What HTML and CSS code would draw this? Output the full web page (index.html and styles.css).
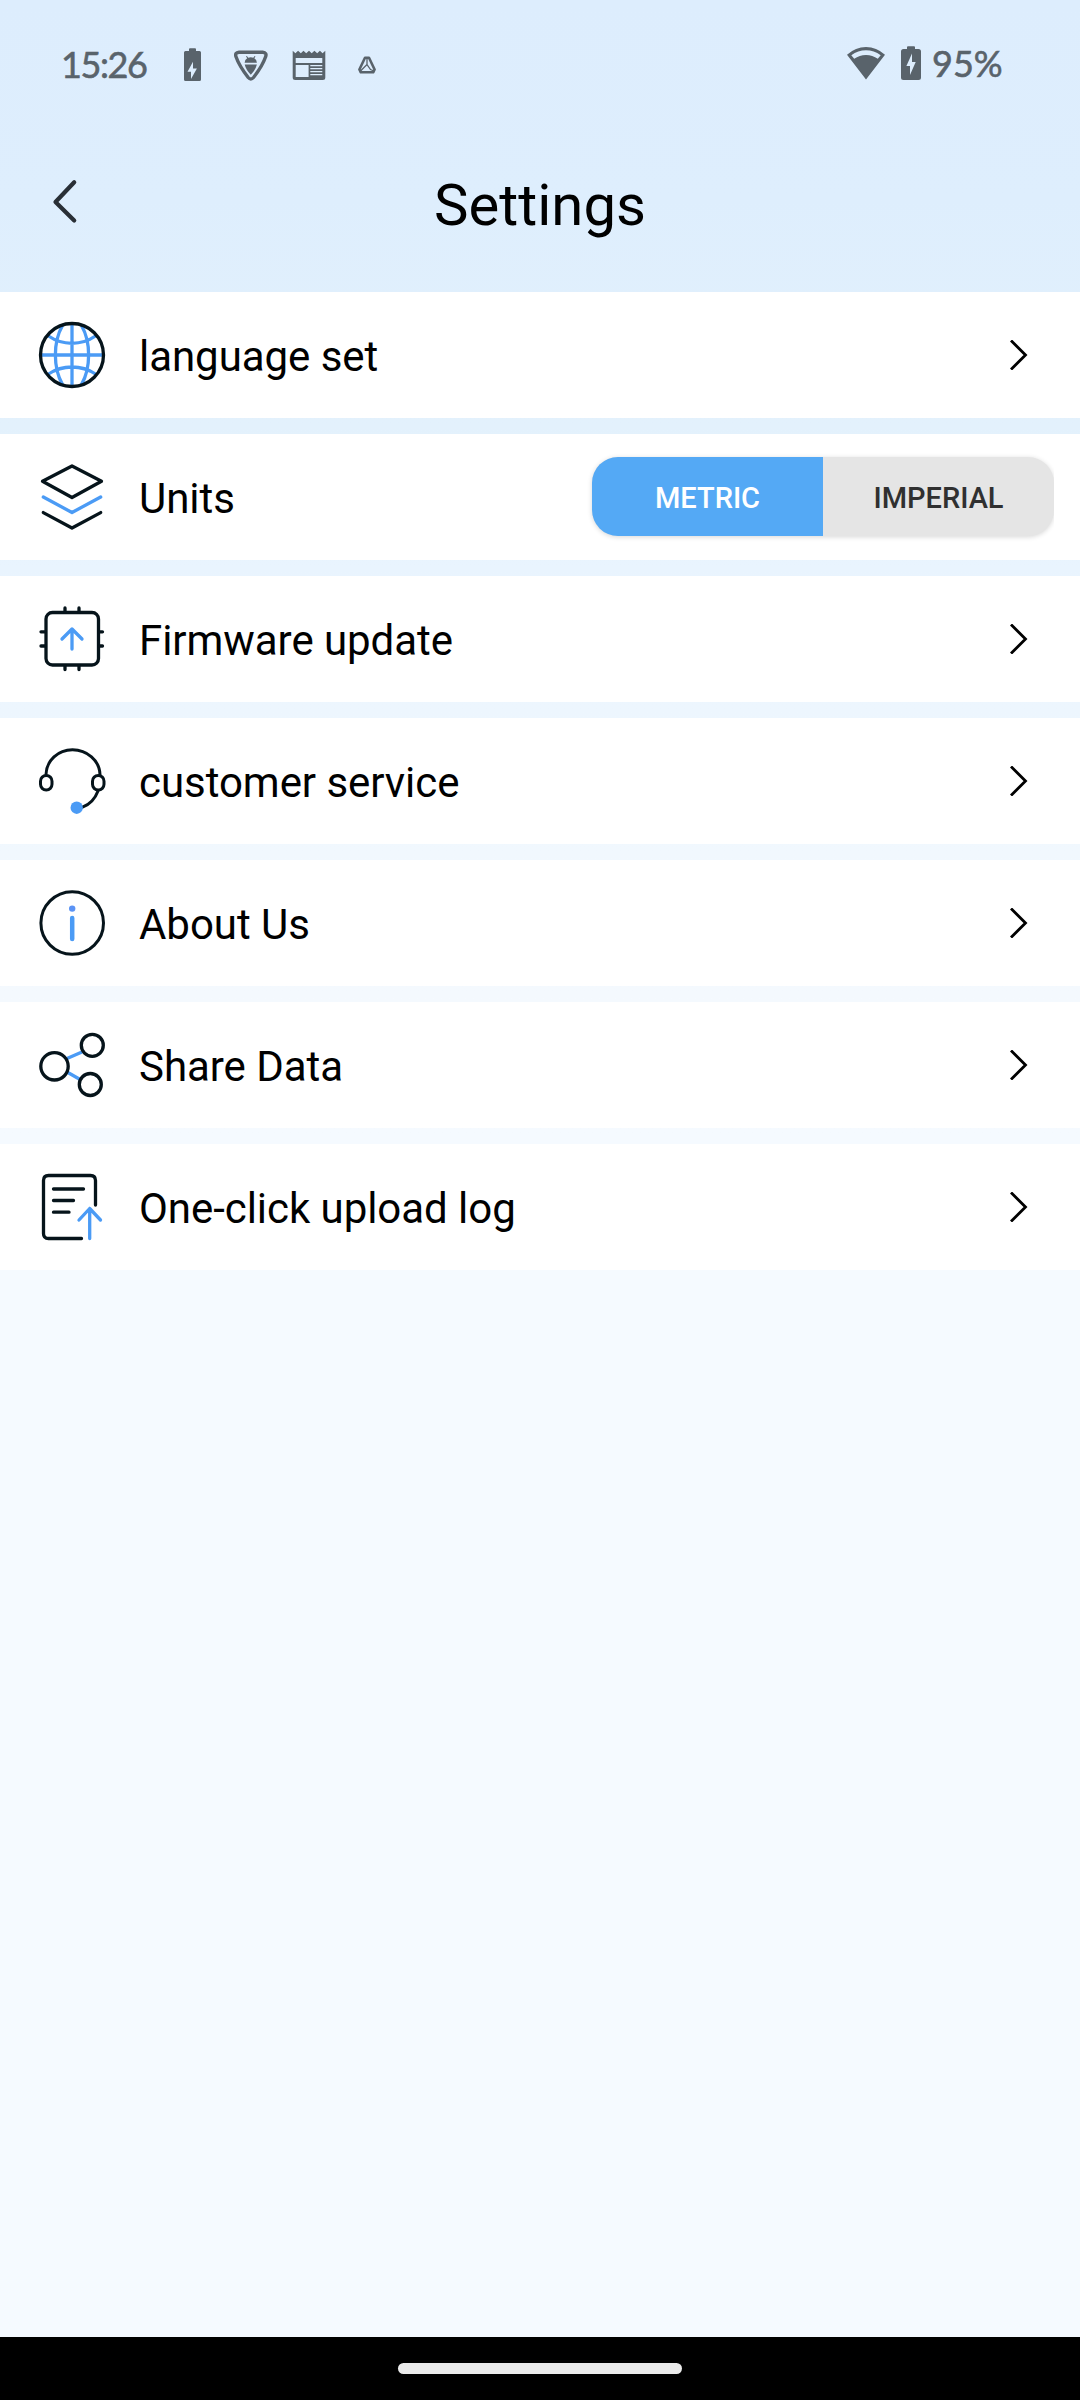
FILE: index.html
```html
<!DOCTYPE html>
<html lang="en">
<head>
<meta charset="utf-8">
<title>Settings</title>
<link rel="stylesheet" href="styles.css">
</head>
<body>
<div class="screen">
  <div class="status-bar">
    <div class="status-left">
      <span class="clock">15:26</span>
      <svg class="st-battery" width="17" height="36" viewBox="0 0 17 36"><path fill="#59636b" fill-rule="evenodd" d="M5 4V2.3Q5 1.3 6 1.3H11Q12 1.3 12 2.3V4H15.5Q17 4 17 5.5V32.500Q17 34 15.500 34H1.500Q0 34 0 32.500V5.500Q0 4 1.500 4ZM9 14.800L3.500 24.700H7V32L12.900 21.500H9Z"/></svg>
      <svg class="st-shield" width="34" height="36" viewBox="0 0 34 36"><path fill="none" stroke="#59636b" stroke-width="3.400" stroke-linejoin="round" d="M5 5.200H28.700Q33.200 5.600 31.600 9.800Q28.500 19 19.500 30.500Q16.800 33.600 14.200 30.500Q5.200 19 2 9.800Q.6 5.600 5 5.200Z"/><path fill="#59636b" d="M10.600 15.800Q10.800 12.700 13.200 11.300L12 9.400L12.900 8.900L14.200 10.800Q16.800 9.900 19.300 10.800L20.600 8.900L21.500 9.400L20.300 11.300Q22.700 12.700 22.900 15.800ZM10.700 17.500H22.900Q21.500 23 16.800 27.700Q12 23 10.700 17.500Z"/></svg>
      <svg class="st-news" width="34" height="36" viewBox="0 0 34 36"><path fill="#59636b" fill-rule="evenodd" d="M.7 3.700L3.400 6.200L6.100 3.700L8.800 6.200L11.500 3.700L14.200 6.200L17 3.700L19.700 6.200L22.400 3.700L25.200 6.200L27.900 3.700L30.600 6.200L33.300 3.700V30.500Q33.300 33 30.800 33H3.200Q.7 33 .7 30.500ZM3.700 11V16H30.300V11ZM3.700 18V30H16.600V18ZM18.300 18V19.300H30.300V18ZM18.300 21V22.300H30.300V21ZM18.300 24V25.300H30.300V24ZM18.300 27V28.300H30.300V27Z"/></svg>
      <svg class="st-triangle" width="18" height="36" viewBox="0 0 18 36"><path fill="none" stroke="#59636b" stroke-width="2.600" stroke-linejoin="round" d="M7 10.700H11L16.600 22.500L15.200 25.300H2.800L1.400 22.500Z"/><path fill="none" stroke="#59636b" stroke-width="1.300" d="M9 11V17.500L12.500 22.500L16 24M9 17.500L5.500 21L2.500 24"/></svg>
    </div>
    <div class="status-right">
      <svg width="38" height="36" viewBox="0 0 38 36"><path fill="#59636b" fill-rule="evenodd" d="M0 9.800Q8.500 2 19 2Q29.500 2 38 9.800L19 34.500ZM4.300 10.200L7.200 13.800Q12.500 9.900 19 9.900Q25.500 9.900 30.800 13.800L33.700 10.200Q27 5.200 19 5.200Q11 5.200 4.300 10.200Z"/></svg>
      <svg class="st-battery2" width="20" height="36" viewBox="0 0 20 36"><path fill="#59636b" fill-rule="evenodd" d="M6 4V2.200Q6 1.200 7 1.200H13Q14 1.200 14 2.200V4H17.500Q20 4 20 6.500V32.500Q20 35 17.500 35H2.500Q0 35 0 32.500V6.500Q0 4 2.500 4ZM11 8.500L5.400 21H9V30L14.700 17H11Z"/></svg>
      <span class="percent">95%</span>
    </div>
  </div>

  <header class="title-bar">
    <svg class="back" width="26" height="46" viewBox="0 0 26 46"><path fill="none" stroke="#292f36" stroke-width="4.200" stroke-linecap="round" stroke-linejoin="round" d="M22.200 3.200L3.500 23L22.200 41.600"/></svg>
    <h1 class="title">Settings</h1>
  </header>

  <main class="list">
    <div class="row">
      <svg class="icon" viewBox="0 0 66 66"><g class="blue"><path d="M33 2V64M2 33H64M23.500 3.500C14 20 14 46 23.500 62.500M42.500 3.500C52 20 52 46 42.500 62.500M9.500 14Q20 21.300 33 21.300T56.500 14M9.500 52Q20 45 33 45T56.500 52"/></g><circle class="dark" cx="33" cy="33" r="31.500"/></svg>
      <span class="label">language set</span>
      <svg class="chevron" viewBox="0 0 20 30"><path d="M2 .5L16.500 15L2 29.500"/></svg>
    </div>
    <div class="row">
      <svg class="icon" viewBox="0 0 66 66"><path class="dark" d="M33 2L62.500 17.300L33 33.500L3.500 17.300Z"/><path class="blue" d="M4.300 33L33 48.500L61.700 33"/><path class="dark" d="M4.300 48.600L33 64L61.700 48.600"/></svg>
      <span class="label">Units</span>
      <div class="toggle"><span class="seg seg-on">METRIC</span><span class="seg">IMPERIAL</span></div>
    </div>
    <div class="row">
      <svg class="icon" viewBox="0 0 66 66"><rect class="dark" x="7" y="6.500" width="52.500" height="52.500" rx="6.500"/><path class="dark" d="M26 6V2M40 6V2M26 60V63.500M40 60V63.500M6 25.800H2M6 40H2M60 25.800H63.500M60 40H63.500"/><path class="blue" d="M33 43V23M23 33L33 23L43 33"/></svg>
      <span class="label">Firmware update</span>
      <svg class="chevron" viewBox="0 0 20 30"><path d="M2 .5L16.500 15L2 29.500"/></svg>
    </div>
    <div class="row">
      <svg class="icon" viewBox="0 0 66 66"><path class="dark thin" d="M7 26.500C7.500 12.500 19 1.700 33.500 1.700S60.500 12.500 61 26.500M59 43Q54.500 55 43.500 59.200"/><rect class="dark thin" x="1.500" y="27.500" width="11.500" height="14.500" rx="5.700"/><rect class="dark thin" x="53.500" y="27.500" width="11.500" height="14.500" rx="5.700"/><circle cx="37.700" cy="59.700" r="6.200" fill="#4b9bf5"/></svg>
      <span class="label">customer service</span>
      <svg class="chevron" viewBox="0 0 20 30"><path d="M2 .5L16.500 15L2 29.500"/></svg>
    </div>
    <div class="row">
      <svg class="icon" viewBox="0 0 66 66"><circle class="dark thin" cx="33.200" cy="33" r="31.300"/><circle cx="33.200" cy="18.600" r="3.200" fill="#5b93f5"/><path class="blue wide" d="M33.200 28V49"/></svg>
      <span class="label">About Us</span>
      <svg class="chevron" viewBox="0 0 20 30"><path d="M2 .5L16.500 15L2 29.500"/></svg>
    </div>
    <div class="row">
      <svg class="icon" viewBox="0 0 66 66"><path class="blue butt" d="M28 26.500L43 20M28 40L42 48"/><g class="dark"><circle cx="15.500" cy="34.300" r="13.700"/><circle cx="53.300" cy="13.300" r="11"/><circle cx="51.300" cy="52.500" r="11"/></g></svg>
      <span class="label">Share Data</span>
      <svg class="chevron" viewBox="0 0 20 30"><path d="M2 .5L16.500 15L2 29.500"/></svg>
    </div>
    <div class="row">
      <svg class="icon" viewBox="0 0 66 66"><path class="dark" d="M42.500 64.500H9.500Q4.500 64.500 4.500 59.500V6.500Q4.500 1.500 9.500 1.500H51.500Q56.500 1.500 56.500 6.500V31M14.500 15H44.500M14.500 26.500H34.500M14.500 38.200H30"/><path class="blue" d="M50.700 64.500V34.500M40 46L50.700 34.500L61.500 46"/></svg>
      <span class="label">One-click upload log</span>
      <svg class="chevron" viewBox="0 0 20 30"><path d="M2 .5L16.500 15L2 29.500"/></svg>
    </div>
  </main>
  <div class="nav-bar"><div class="nav-pill"></div></div>
</div>
</body>
</html>
```
FILE: styles.css
```css
* { box-sizing: border-box; }
body { margin: 0; }
.screen {
  display: flex;
  flex-direction: column;
  width: 1080px;
  height: 2400px;
  font-family: Roboto, "Liberation Sans", sans-serif;
  color: #000;
  background: linear-gradient(180deg, #ddedfd 0, #deeefd 200px, #e3f1fc 426px, #e9f4fe 568px, #edf6fe 710px, #f1f8fe 852px, #f4f9fe 994px, #f5faff 1136px);
}
svg { display: block; flex: none; }

.status-bar {
  display: flex;
  justify-content: space-between;
  height: 128px;
  padding: 45px 75px 0 61px;
  font-family: Lato, Roboto, sans-serif;
  font-size: 36px;
  line-height: 36px;
  color: #59636b;
}
.status-left, .status-right { display: flex; height: 36px; }
.status-left { padding-top: 2px; height: 38px; }
.clock { width: 123px; margin-top: -1px; letter-spacing: -1.400px; -webkit-text-stroke: .6px #59636b; }
.st-shield { margin-left: 33px; }
.st-news { margin-left: 24px; }
.st-triangle { margin-left: 32px; }
.st-battery2 { margin-left: 16px; }
.percent { width: 73px; margin-left: 11px; -webkit-text-stroke: .6px #59636b; }

.title-bar {
  display: grid;
  grid-template-columns: 75px 1fr 75px;
  height: 164px;
}
.back { margin: 51px 0 0 52px; }
.title {
  margin: 43px 0 0;
  font-size: 58px;
  line-height: 68px;
  font-weight: 400;
  text-align: center;
}

.list { display: flex; flex-direction: column; gap: 16px; }
.row {
  display: flex;
  align-items: center;
  height: 126px;
  padding: 0 51px 0 39px;
  background: #fff;
}
.icon { width: 66px; height: 66px; overflow: visible; }
.icon .dark, .icon .blue {
  fill: none;
  stroke: #06141b;
  stroke-width: 3.300px;
  stroke-linecap: round;
  stroke-linejoin: round;
}
.icon .blue { stroke: #4b9bf5; }
.icon .thin { stroke-width: 3px; }
.icon .wide { stroke-width: 4.500px; }
.icon .butt { stroke-linecap: butt; }
.label {
  flex: 1;
  margin: 3px 0 0 34px;
  font-size: 42px;
  line-height: 50px;
  letter-spacing: -.05px;
}
.chevron { width: 20px; height: 30px; margin-bottom: 1px; }
.chevron path { fill: none; stroke: #000; stroke-width: 2.800px; }

.toggle {
  display: flex;
  width: 462px;
  height: 79px;
  margin: 0 -25px 1px 0;
  border-radius: 26px;
  background: #e5e5e5;
  box-shadow: 0 1px 5px rgba(0, 0, 0, .16);
  clip-path: inset(-10px 0 -10px -10px);
}
.seg {
  flex: 1;
  padding-top: 2px;
  font-size: 29px;
  line-height: 79px;
  font-weight: 500;
  text-align: center;
  color: #303030;
}
.seg-on {
  color: #fff;
  background: #54a9f5;
  border-radius: 26px 0 0 26px;
}

.nav-bar {
  display: flex;
  justify-content: center;
  height: 63px;
  margin-top: auto;
  padding-top: 26px;
  background: #000;
}
.nav-pill { width: 284px; height: 11px; border-radius: 6px; background: #ebebeb; }
```
